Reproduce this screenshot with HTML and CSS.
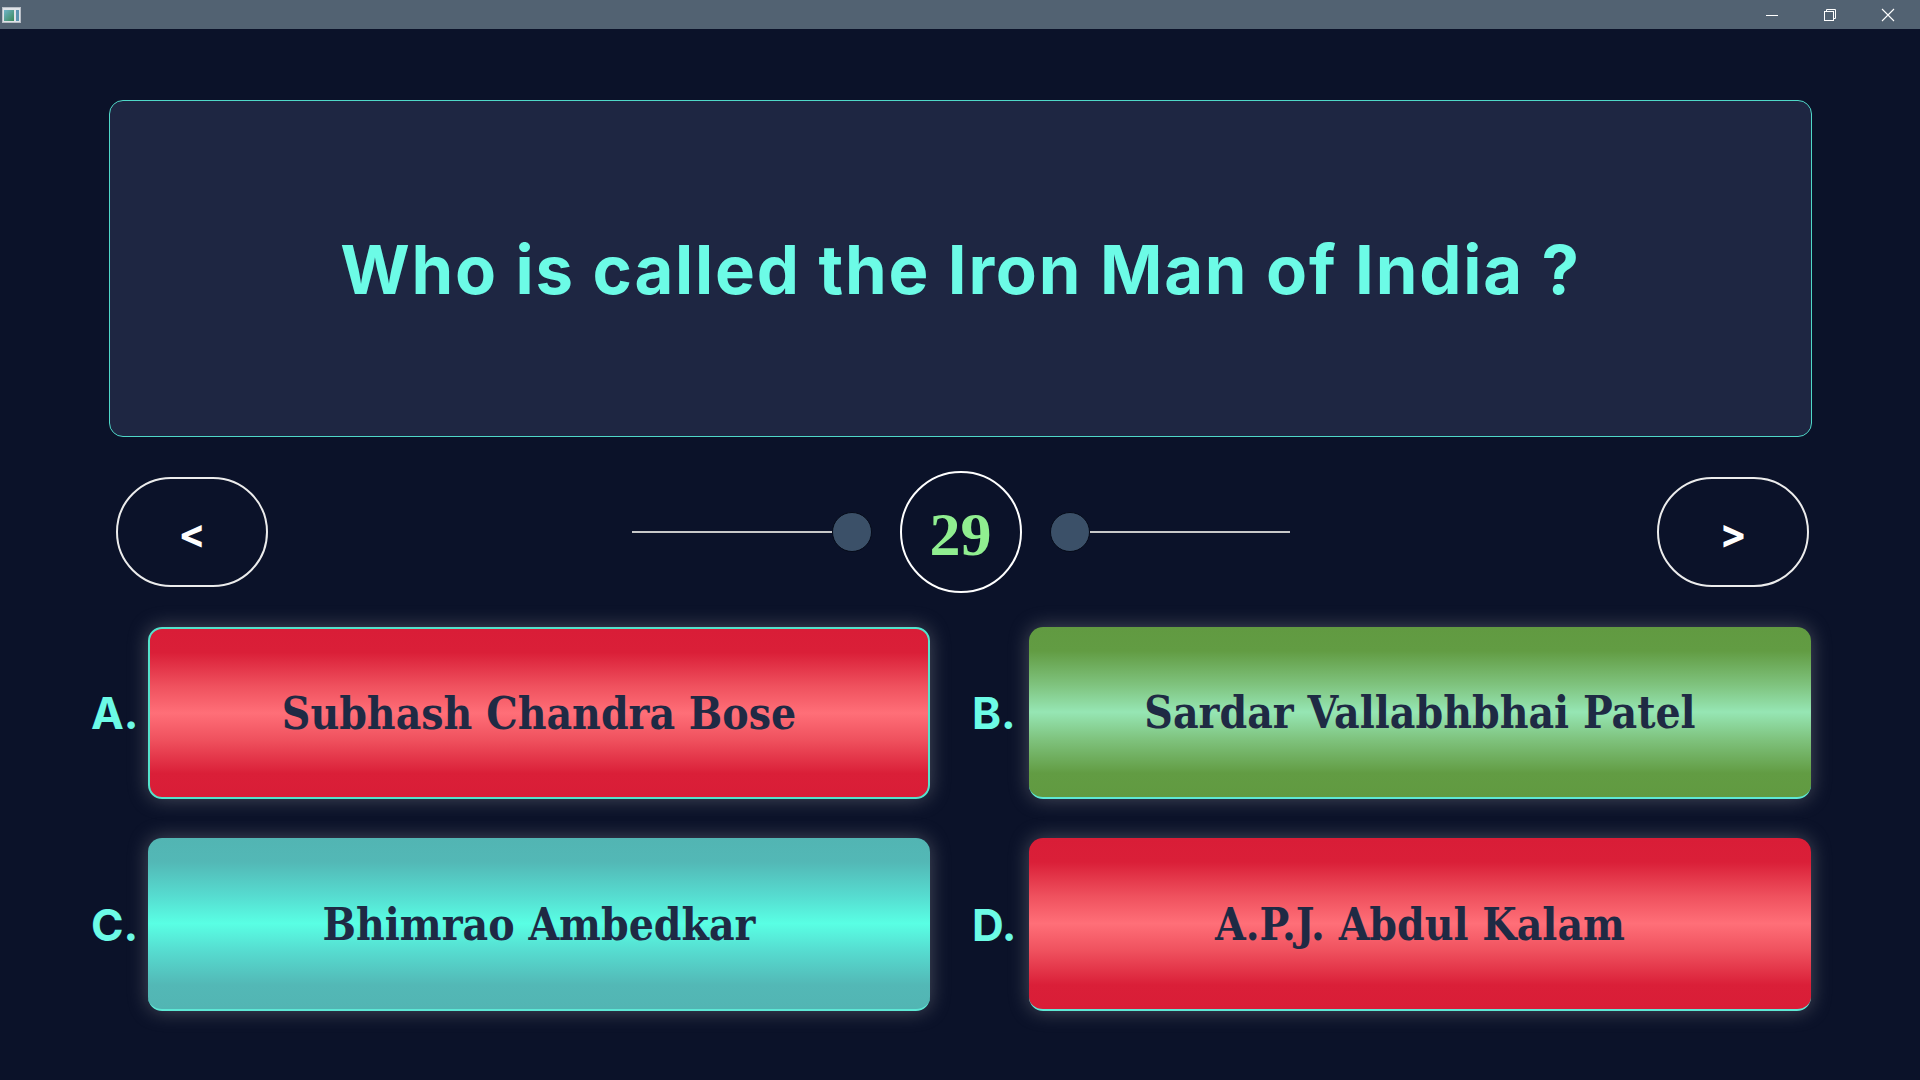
FILE: index.html
```html
<!DOCTYPE html>
<html lang="en">
<head>
<meta charset="utf-8">
<title>Quiz</title>
<link rel="stylesheet" href="styles.css">
</head>
<body>
<div class="titlebar">
  <svg class="app-icon" width="20" height="17" viewBox="0 0 20 17">
    <defs>
      <linearGradient id="ig" x1="0" y1="0" x2="1" y2="1">
        <stop offset="0" stop-color="#6fb3c9"/>
        <stop offset="1" stop-color="#3a8a5a"/>
      </linearGradient>
    </defs>
    <rect x="0.5" y="0.5" width="18" height="15" fill="#dfe3e8" stroke="#b8bec6"/>
    <rect x="2" y="3" width="10" height="11" fill="url(#ig)"/>
    <rect x="14" y="3" width="3" height="11" fill="#5b93b0"/>
  </svg>
  <div class="controls">
    <svg class="ctl" width="14" height="14" viewBox="0 0 14 14"><line x1="1" y1="7.5" x2="13" y2="7.5" stroke="#fff" stroke-width="1"/></svg>
    <svg class="ctl" width="14" height="14" viewBox="0 0 14 14"><rect x="1.5" y="3.5" width="9" height="9" fill="none" stroke="#fff"/><path d="M3.5 3.5V1.5h9v9h-2" fill="none" stroke="#fff"/></svg>
    <svg class="ctl" width="14" height="14" viewBox="0 0 14 14"><path d="M1 1L13 13M13 1L1 13" stroke="#fff" stroke-width="1.1"/></svg>
  </div>
</div>

<main class="main">
  <section class="question">
    <h1 class="question-text">Who is called the Iron Man of India ?</h1>
  </section>

  <nav class="nav">
    <button class="nav-btn prev">&lt;</button>
    <div class="progress">
      <span class="line"></span>
      <span class="dot"></span>
      <div class="number">29</div>
      <span class="dot"></span>
      <span class="line"></span>
    </div>
    <button class="nav-btn next">&gt;</button>
  </nav>

  <section class="options">
    <div class="option">
      <span class="label">A.</span>
      <div class="card red selected">Subhash Chandra Bose</div>
    </div>
    <div class="option">
      <span class="label">B.</span>
      <div class="card green">Sardar Vallabhbhai Patel</div>
    </div>
    <div class="option">
      <span class="label">C.</span>
      <div class="card teal">Bhimrao Ambedkar</div>
    </div>
    <div class="option">
      <span class="label">D.</span>
      <div class="card red">A.P.J. Abdul Kalam</div>
    </div>
  </section>
</main>
</body>
</html>
```

FILE: styles.css
```css
* { box-sizing: border-box; }

html, body {
  margin: 0;
  padding: 0;
  width: 1920px;
  height: 1080px;
  overflow: hidden;
  background: #0b1229;
  font-family: "Inter", "Liberation Sans", sans-serif;
}

.titlebar {
  height: 29px;
  background: #526272;
  display: flex;
  align-items: center;
  justify-content: space-between;
  padding-left: 2px;
}

.app-icon { display: block; margin-top: 1px; }

.controls {
  display: flex;
  align-items: center;
  gap: 44px;
  padding-right: 25px;
}

.ctl { display: block; }

.main {
  padding-top: 71px;
}

.question {
  margin-left: 109px;
  width: 1703px;
  height: 337px;
  background: #1e2642;
  border: 1px solid #4fd8c8;
  border-radius: 14px;
  display: flex;
  align-items: center;
  justify-content: center;
}

.question-text {
  margin: 0;
  color: #6cfbe6;
  font-family: "Inter", "Liberation Sans", sans-serif;
  font-weight: 700;
  font-size: 67px;
  letter-spacing: 1.8px;
  line-height: 1;
  padding-top: 2px;
}

.nav {
  margin-top: 34px;
  height: 122px;
  display: grid;
  grid-template-columns: 1fr auto 1fr;
  align-items: center;
  padding: 0 111px 0 116px;
}

.nav-btn {
  width: 152px;
  height: 110px;
  border: 2px solid #ececec;
  border-radius: 55px;
  background: transparent;
  color: #ffffff;
  font-family: "Inter", "Liberation Sans", sans-serif;
  font-weight: 700;
  font-size: 40px;
  line-height: 1;
  padding: 4px 0 0 0;
  display: flex;
  align-items: center;
  justify-content: center;
}

.prev { justify-self: start; }
.next { justify-self: end; }

.progress {
  display: flex;
  align-items: center;
  margin-left: -4px;
}

.line {
  width: 200px;
  height: 2px;
  background: #c8c8c8;
}

.dot {
  width: 40px;
  height: 40px;
  border-radius: 50%;
  background: #3b5068;
  border: 1px solid #050a18;
}

.number {
  width: 122px;
  height: 122px;
  margin: 0 28px;
  border: 2px solid #ffffff;
  border-radius: 50%;
  display: flex;
  align-items: center;
  justify-content: center;
  color: #90ee90;
  font-family: "Liberation Serif", "DejaVu Serif", serif;
  font-weight: 700;
  font-size: 62px;
  line-height: 1;
  padding-top: 4px;
}

.options {
  margin-top: 34px;
  padding-left: 91px;
  display: grid;
  grid-template-columns: 839px 839px;
  grid-template-rows: 172px 173px;
  column-gap: 42px;
  row-gap: 39px;
}

.option {
  display: flex;
  align-items: center;
}

.label {
  width: 57px;
  flex: none;
  color: #6cfbe6;
  font-family: "Inter", "Liberation Sans", sans-serif;
  font-weight: 700;
  font-size: 44px;
  line-height: 1;
}

.card {
  flex: 1;
  height: 100%;
  border-radius: 14px;
  display: flex;
  align-items: center;
  justify-content: center;
  color: #1f2a44;
  font-family: "DejaVu Serif Condensed", "DejaVu Serif", serif;
  font-stretch: condensed;
  font-weight: 700;
  font-size: 44px;
  line-height: 1;
  padding-top: 2px;
  box-shadow: 0 0 20px rgba(190, 190, 190, 0.34);
  border-bottom: 2px solid #5ee8d5;
}

.card.selected {
  border: 2px solid #54e3cc;
}

.red {
  background: linear-gradient(to bottom,
    #d91d37 0%, #da1f38 14%, #ef515e 34%, #ff6f78 50%,
    #ef515e 66%, #da1f38 86%, #d91d37 100%);
}

.green {
  background: linear-gradient(to bottom,
    #619a41 0%, #629c43 14%, #7fc37e 34%, #96e6b4 50%,
    #7fc37e 66%, #629c43 86%, #619a41 100%);
}

.teal {
  background: linear-gradient(to bottom,
    #52b5b3 0%, #53b8b6 14%, #56dcd0 34%, #59ffe4 50%,
    #56dcd0 66%, #53b8b6 86%, #52b5b3 100%);
}
```
